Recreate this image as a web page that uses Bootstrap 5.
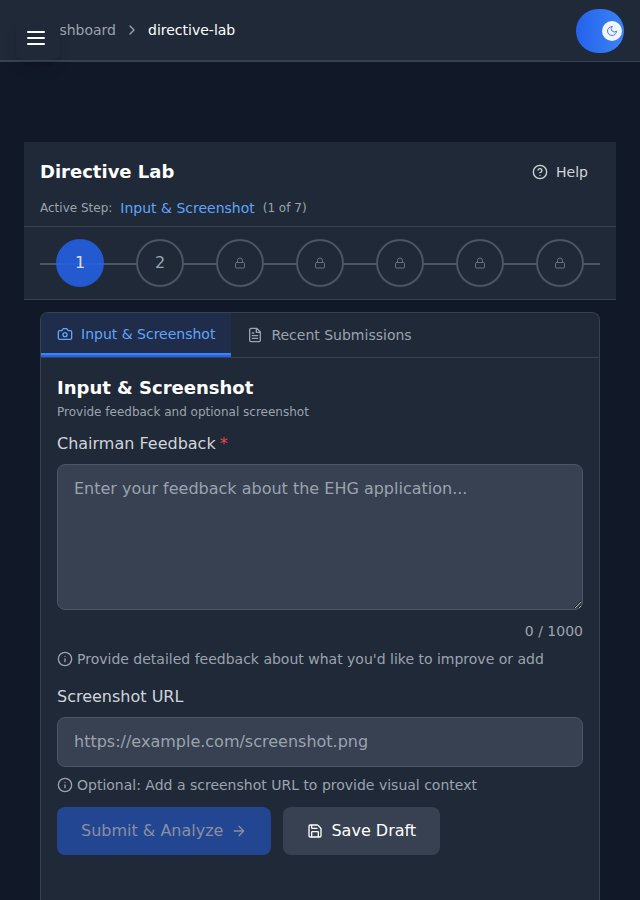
<!DOCTYPE html>
<html lang="en">
<head>
<meta charset="utf-8">
<meta name="viewport" content="width=device-width, initial-scale=1">
<title>Directive Lab</title>
<link rel="stylesheet" href="https://cdn.jsdelivr.net/npm/bootstrap@5.3.0/dist/css/bootstrap.min.css">
<style>
:root{--g9:#111827;--g8:#1f2937;--g7:#374151;--g6:#4b5563;--g5:#6b7280;--g4:#9ca3af;--g3:#d1d5db}
body{background:var(--g9);color:#fff;font:16px/24px "DejaVu Sans",sans-serif;height:900px;overflow:hidden}
svg{fill:none;stroke:currentColor;stroke-width:2;stroke-linecap:round;stroke-linejoin:round;flex:none}
.t14{font-size:14px;line-height:20px}
.t12{font-size:12px;line-height:16px}
.c3{color:var(--g3)}.c4{color:var(--g4)}.blue{color:#60a5fa}
.topbar{height:62px;background:var(--g8);border-bottom:1px solid var(--g7);padding:0 16px 2px 0}
.topbar::after{content:"";position:absolute;left:0;bottom:0;width:560px;height:1px;background:var(--g7)}
.menu-btn{width:44px;height:44px;margin:16px 0 0 16px;background:var(--g8);border:0;border-radius:8px;color:#fff;box-shadow:0 10px 15px -3px rgba(0,0,0,.1),0 4px 6px -4px rgba(0,0,0,.1)}
.crumbs{margin-left:-.6px}
.theme{width:48px;height:44px;margin-top:2px;border:0;border-radius:22px;background:linear-gradient(90deg,#2563eb,#3b82f6);padding:0 2px}
.knob{width:20px;height:20px;background:#f3f4f6;color:#3b82f6}
.lab{margin:80px 24px 0;background:var(--g8)}
.lab-head{height:85px;padding:12px 16px 8px;border-bottom:1px solid var(--g7)}
.title{font-size:18px;line-height:28px;font-weight:700;margin:0}
.help{padding:8px 12px;height:36px}
.steps{height:73px;padding:12px 16px;border-bottom:1px solid var(--g7)}
.steps::before{content:"";position:absolute;left:16px;right:16px;top:36px;height:2px;background:var(--g6)}
.dot{width:48px;height:48px;border:2px solid var(--g6);background:var(--g8);color:var(--g4);position:relative}
.dot.on{background:#2563eb;border-color:#2563eb;color:#fff;opacity:.85}
.dot svg{color:var(--g5)}
.panel{margin:12px 40px 0;height:588px;background:var(--g8);border:1px solid var(--g7);border-bottom:0;border-radius:8px 8px 0 0;overflow:hidden}
.tabs{height:45px;border-bottom:1px solid var(--g7)}
.tab-a{width:190px;padding:0 15px 1px 16px;white-space:nowrap;background:#1f2d4a;border-bottom:2px solid #2563eb;box-shadow:inset 0 -2px #3b82f6}
.tab-b{padding:0 16.4px}
.pbody{padding:16px}
.sub{margin:2px 0 12px}
.count{margin:11px 0 8px}
.field{display:block;width:100%;background:var(--g7);border:1px solid var(--g6);border-radius:8px;padding:12px 16px;color:#fff}
.field::placeholder{color:var(--g4);opacity:1}
textarea.field{height:146px;resize:vertical}
.url-label{margin:16px 0 8px}
.actions{gap:12px;margin-top:12px}
.act{height:48px;border-radius:8px;border:0;padding:0 24px;color:#fff;background:var(--g7)}
.act.off{background:#234693;color:#8790a0}
.star{color:#ef4444}
</style>
<script src="https://cdn.jsdelivr.net/npm/bootstrap@5.3.0/dist/js/bootstrap.bundle.min.js"></script>
</head>
<body>
<svg class="d-none">
<symbol id="lock" viewBox="0 0 24 24"><rect x="3" y="11" width="18" height="11" rx="2"/><path d="M7 11V7a5 5 0 0 1 10 0v4"/></symbol>
<symbol id="info" viewBox="0 0 24 24"><circle cx="12" cy="12" r="10"/><path d="M12 16v-4M12 8h.01"/></symbol>
</svg>
<header class="topbar d-flex position-relative">
  <button class="menu-btn d-flex align-items-center justify-content-center p-0 pe-1" aria-label="Menu"><svg width="24" height="24" viewBox="0 0 24 24"><path d="M4 6h16M4 12h16M4 18h16"/></svg></button>
  <nav class="crumbs t14 d-flex align-items-center"><span class="c4">shboard</span><svg class="c4 mx-2" width="16" height="16" viewBox="0 0 24 24"><path d="m9 18 6-6-6-6"/></svg><span>directive-lab</span></nav>
  <button class="theme ms-auto d-flex align-items-center justify-content-end align-self-center" aria-label="Theme"><span class="knob rounded-circle d-flex align-items-center justify-content-center"><svg width="12" height="12" viewBox="0 0 24 24"><path d="M12 3a6 6 0 0 0 9 9 9 9 0 1 1-9-9Z"/></svg></span></button>
</header>
<main>
<section class="lab">
  <div class="lab-head">
    <div class="d-flex justify-content-between align-items-center"><h1 class="title">Directive Lab</h1>
      <div class="help t14 c3 d-flex align-items-center gap-2"><svg width="16" height="16" viewBox="0 0 24 24"><circle cx="12" cy="12" r="10"/><path d="M9.09 9a3 3 0 0 1 5.83 1c0 2-3 3-3 3M12 17h.01"/></svg>Help</div></div>
    <div class="d-flex align-items-center gap-2 t12 c4 mt-2"><span>Active Step:</span><span class="t14 blue">Input &amp; Screenshot</span><span>(1 of 7)</span></div>
  </div>
  <div class="steps position-relative d-flex justify-content-around">
    <div class="dot on rounded-circle d-flex align-items-center justify-content-center">1</div>
    <div class="dot rounded-circle d-flex align-items-center justify-content-center">2</div>
    <div class="dot rounded-circle d-flex align-items-center justify-content-center"><svg width="12" height="12"><use href="#lock"/></svg></div>
    <div class="dot rounded-circle d-flex align-items-center justify-content-center"><svg width="12" height="12"><use href="#lock"/></svg></div>
    <div class="dot rounded-circle d-flex align-items-center justify-content-center"><svg width="12" height="12"><use href="#lock"/></svg></div>
    <div class="dot rounded-circle d-flex align-items-center justify-content-center"><svg width="12" height="12"><use href="#lock"/></svg></div>
    <div class="dot rounded-circle d-flex align-items-center justify-content-center"><svg width="12" height="12"><use href="#lock"/></svg></div>
  </div>
</section>
<section class="panel">
  <div class="tabs d-flex t14 c4">
    <div class="tab-a blue d-flex align-items-center gap-2"><svg width="16" height="16" viewBox="0 0 24 24"><path d="M14.5 4h-5L7 7H4a2 2 0 0 0-2 2v9a2 2 0 0 0 2 2h16a2 2 0 0 0 2-2V9a2 2 0 0 0-2-2h-3l-2.500-3z"/><circle cx="12" cy="13" r="3"/></svg>Input &amp; Screenshot</div>
    <div class="tab-b d-flex align-items-center gap-2"><svg width="16" height="16" viewBox="0 0 24 24"><path d="M14.500 2H6a2 2 0 0 0-2 2v16a2 2 0 0 0 2 2h12a2 2 0 0 0 2-2V7.500zM14 2v6h6M16 13H8M16 17H8M10 9H8"/></svg>Recent Submissions</div>
  </div>
  <div class="pbody">
    <h2 class="title">Input &amp; Screenshot</h2>
    <p class="sub t12 c4">Provide feedback and optional screenshot</p>
    <label class="c3 d-block mb-2" for="fb">Chairman Feedback<span class="star ms-1">*</span></label>
    <textarea class="field" id="fb" placeholder="Enter your feedback about the EHG application..."></textarea>
    <div class="t14 c4 text-end count">0 / 1000</div>
    <div class="t14 c4 d-flex align-items-center gap-1"><svg width="16" height="16"><use href="#info"/></svg>Provide detailed feedback about what you'd like to improve or add</div>
    <label class="url-label c3 d-block" for="url">Screenshot URL</label>
    <input class="field" id="url" placeholder="https://example.com/screenshot.png">
    <div class="t14 c4 d-flex align-items-center gap-1 mt-2"><svg width="16" height="16"><use href="#info"/></svg>Optional: Add a screenshot URL to provide visual context</div>
    <div class="actions d-flex">
      <button class="act off d-flex align-items-center gap-2" disabled>Submit &amp; Analyze<svg width="16" height="16" viewBox="0 0 24 24"><path d="M5 12h14M12 5l7 7-7 7"/></svg></button>
      <button class="act d-flex align-items-center gap-2"><svg width="16" height="16" viewBox="0 0 24 24"><path d="M15.200 3a2 2 0 0 1 1.400.6l3.800 3.800a2 2 0 0 1 .6 1.400V19a2 2 0 0 1-2 2H5a2 2 0 0 1-2-2V5a2 2 0 0 1 2-2zM17 21v-7a1 1 0 0 0-1-1H8a1 1 0 0 0-1 1v7M7 3v4a1 1 0 0 0 1 1h7"/></svg>Save Draft</button>
    </div>
  </div>
</section>
</main>
</body>
</html>
